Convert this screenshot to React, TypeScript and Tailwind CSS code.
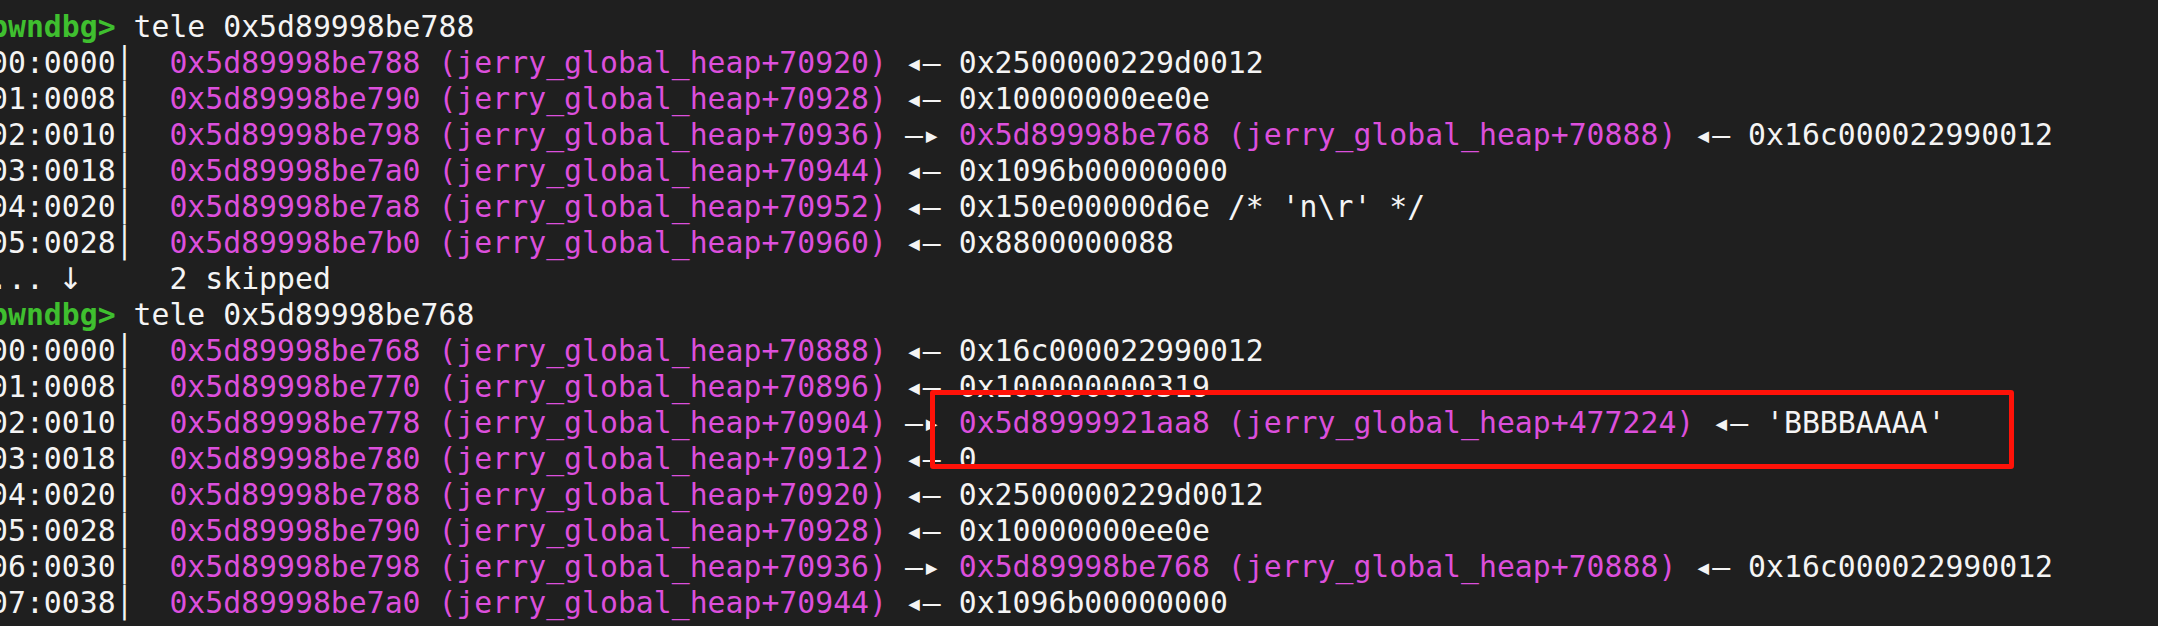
import React from 'react';

type Seg = { t: string; c?: 'm' | 'g' | 'w' | 'a' };

const PROMPT = (addr: string): Seg[] => [
  { t: 'pwndbg>', c: 'g' },
  { t: ' tele ' + addr, c: 'w' },
];

const row = (idx: string, addr: string, sym: string, rest: Seg[]): Seg[] => [
  { t: idx + '│  ', c: 'w' },
  { t: addr + ' (' + sym + ')', c: 'm' },
  ...rest,
];

const val = (v: string): Seg[] => [{ t: ' ◂— ' + v, c: 'w' }];
const ptr = (addr: string, sym: string, v: string): Seg[] => [
  { t: ' —▸ ', c: 'w' },
  { t: addr + ' (' + sym + ')', c: 'm' },
  { t: ' ◂— ' + v, c: 'w' },
];

const lines: Seg[][] = [
  PROMPT('0x5d89998be788'),
  row('00:0000', '0x5d89998be788', 'jerry_global_heap+70920', val('0x2500000229d0012')),
  row('01:0008', '0x5d89998be790', 'jerry_global_heap+70928', val('0x10000000ee0e')),
  row('02:0010', '0x5d89998be798', 'jerry_global_heap+70936', ptr('0x5d89998be768', 'jerry_global_heap+70888', '0x16c000022990012')),
  row('03:0018', '0x5d89998be7a0', 'jerry_global_heap+70944', val('0x1096b00000000')),
  row('04:0020', '0x5d89998be7a8', 'jerry_global_heap+70952', val("0x150e00000d6e /* 'n\\r' */")),
  row('05:0028', '0x5d89998be7b0', 'jerry_global_heap+70960', val('0x8800000088')),
  [{ t: '... ', c: 'w' }, { t: '↓', c: 'a' }, { t: '     2 skipped', c: 'w' }],
  PROMPT('0x5d89998be768'),
  row('00:0000', '0x5d89998be768', 'jerry_global_heap+70888', val('0x16c000022990012')),
  row('01:0008', '0x5d89998be770', 'jerry_global_heap+70896', val('0x100000000319')),
  row('02:0010', '0x5d89998be778', 'jerry_global_heap+70904', ptr('0x5d8999921aa8', 'jerry_global_heap+477224', "'BBBBAAAA'")),
  row('03:0018', '0x5d89998be780', 'jerry_global_heap+70912', val('0')),
  row('04:0020', '0x5d89998be788', 'jerry_global_heap+70920', val('0x2500000229d0012')),
  row('05:0028', '0x5d89998be790', 'jerry_global_heap+70928', val('0x10000000ee0e')),
  row('06:0030', '0x5d89998be798', 'jerry_global_heap+70936', ptr('0x5d89998be768', 'jerry_global_heap+70888', '0x16c000022990012')),
  row('07:0038', '0x5d89998be7a0', 'jerry_global_heap+70944', val('0x1096b00000000')),
];

const color = {
  m: 'text-[#dc4fdc]',
  g: 'text-[#3fbf2f] font-bold',
  w: 'text-[#f4f4f4]',
  // the mono font's arrow is tiny, borrow the wider one and keep one cell
  a: "text-[#f4f4f4] inline-flex w-[17.94px] justify-center font-['DejaVu_Sans',sans-serif]",
};

export default function App() {
  return (
    <div className="relative w-[2158px] h-[626px] overflow-hidden bg-[#1f1f1f]">
      {/* terminal output */}
      <div className="-ml-[10px] pt-[9px] font-['DejaVu_Sans_Mono',monospace] text-[29.8px] leading-[36px] whitespace-pre">
        {lines.map((segs, i) => (
          <div key={i} className="h-[36px]">
            {segs.map((s, j) => (
              <span key={j} className={color[s.c ?? 'w']}>
                {s.t}
              </span>
            ))}
          </div>
        ))}
      </div>

      {/* annotation box */}
      <div className="absolute left-[930px] top-[390px] w-[1084px] h-[79px] border-[5px] border-[#ff1208] rounded-[3px]" />
    </div>
  );
}
